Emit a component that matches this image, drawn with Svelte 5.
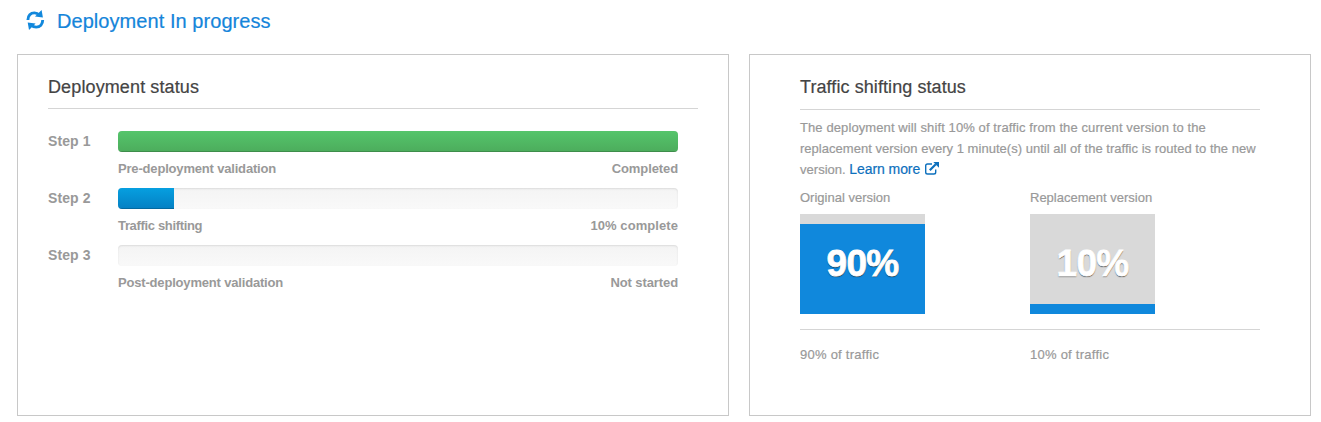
<script>
  const steps = [
    { name: 'Step 1', label: 'Pre-deployment validation', state: 'Completed', percent: 100, tone: 'done', fit: [-0.18, -0.1] },
    { name: 'Step 2', label: 'Traffic shifting', state: '10% complete', percent: 10, tone: 'active', fit: [-0.34, 0.07] },
    { name: 'Step 3', label: 'Post-deployment validation', state: 'Not started', percent: 0, tone: 'idle', fit: [-0.18, -0.1] }
  ];
  const versions = [
    { name: 'Original version', percent: 90 },
    { name: 'Replacement version', percent: 10 }
  ];
</script>

<div class="page">
  <header>
    <svg class="sync" width="20" height="20" viewBox="0 0 20 20" fill="none">
      <path d="M2.9 9.9C2.9 5.6 5.6 2.9 9.4 2.9c2 0 3.6.7 4.8 2.1M17.7 10.1c0 4.3-2.7 7-6.5 7-2 0-3.6-.7-4.8-2.1" stroke="#1288dc" stroke-width="2.9" />
      <path d="M16.6 0l1.3 7.6-7.9-1.1zM4 20l-1.3-7.6 7.9 1.1z" fill="#1288dc" />
    </svg>
    <h1>Deployment In progress</h1>
  </header>

  <main>
    <section class="panel status">
      <h2>Deployment status</h2>
      <div class="steps">
        {#each steps as step}
          <div class="step">
            <div class="name">{step.name}</div>
            <div class="progress">
              <div class="track"><div class="fill {step.tone}" style="width: {step.percent}%"></div></div>
              <div class="caption">
                <span style="letter-spacing: {step.fit[0]}px">{step.label}</span>
                <span style="letter-spacing: {step.fit[1]}px">{step.state}</span>
              </div>
            </div>
          </div>
        {/each}
      </div>
    </section>

    <section class="panel traffic">
      <h2>Traffic shifting status</h2>
      <p>
        <span class="wide">The deployment will shift 10% of traffic from the current version to the</span><br />
        replacement version every 1 minute(s) until all of the traffic is routed to the new<br />
        version. <span class="link">Learn more<svg width="14" height="13" viewBox="0 0 14 13" fill="none">
          <path d="M7 2H2.5Q.7 2 .7 3.8v6.4Q.7 12 2.5 12h6.4q1.8 0 1.8-1.8V7.5" stroke="#0d70bd" stroke-width="1.4" />
          <path d="M4.8 8.3l6-6" stroke="#0d70bd" stroke-width="2.2" />
          <path d="M8.3 0H14v5.7z" fill="#0d70bd" />
        </svg></span>
      </p>
      <div class="versions">
        {#each versions as version}
          <div class="version">
            <div class="title">{version.name}</div>
            <div class="box">
              <div class="level" style="height: {version.percent}%"></div>
              <strong>{version.percent}%</strong>
            </div>
          </div>
        {/each}
      </div>
      <div class="totals">
        {#each versions as version}
          <div class="version">{version.percent}% of traffic</div>
        {/each}
      </div>
    </section>
  </main>
</div>

<style>
  :global(body) {
    background: #fff;
  }
  .page {
    box-sizing: border-box;
    width: 1321px;
    height: 422px;
    overflow: hidden;
    font-family: "Liberation Sans", Arial, sans-serif;
    font-size: 13px;
    color: #999;
  }
  header {
    display: flex;
    box-sizing: border-box;
    height: 54px;
    padding: 10px 0 0 25px;
    gap: 12px;
  }
  .sync {
    display: block;
  }
  h1 {
    margin: 0;
    font-size: 20px;
    line-height: 23px;
    font-weight: 400;
    letter-spacing: 0.06px;
    color: #1585da;
    -webkit-text-stroke: 0.2px;
  }
  main {
    display: flex;
    gap: 20px;
    padding-left: 17px;
  }
  .panel {
    box-sizing: border-box;
    height: 362px;
    border: 1px solid #c8c8c8;
  }
  .status {
    width: 712px;
    padding: 20px 30px 0;
  }
  .traffic {
    width: 562px;
    padding: 20px 50px 0;
  }
  h2 {
    box-sizing: border-box;
    height: 34px;
    margin: 0;
    border-bottom: 1px solid #d5d5d5;
    font-size: 18px;
    line-height: 24px;
    font-weight: 400;
    letter-spacing: 0.12px;
    color: #444;
    -webkit-text-stroke: 0.2px;
  }
  .traffic h2 {
    height: 35px;
    letter-spacing: 0.08px;
  }
  .steps {
    padding-top: 22px;
  }
  .step {
    display: flex;
    height: 57px;
  }
  .name {
    width: 70px;
    font-size: 14px;
    line-height: 21px;
    font-weight: 700;
    letter-spacing: 0.1px;
  }
  .progress {
    width: 560px;
  }
  .track {
    height: 21px;
    overflow: hidden;
    border-radius: 4px;
    background: linear-gradient(#f4f4f4, #f9f9f9);
    box-shadow: inset 0 1px 2px rgba(0, 0, 0, 0.1);
  }
  .fill {
    height: 100%;
    box-shadow: inset 0 -1px 0 rgba(0, 0, 0, 0.18);
  }
  .done {
    background: linear-gradient(#55c56b, #4cac5c);
  }
  .active {
    background: linear-gradient(#069fe0, #0480c3);
  }
  .idle {
    box-shadow: none;
  }
  .caption {
    display: flex;
    justify-content: space-between;
    padding-top: 7px;
    line-height: 20px;
    font-weight: 700;
  }
  p {
    margin: 7px 0 0;
    line-height: 21px;
    letter-spacing: 0.025px;
    white-space: nowrap;
    -webkit-text-stroke: 0.2px;
  }
  .wide {
    letter-spacing: 0.1px;
  }
  .link {
    font-size: 14px;
    letter-spacing: -0.08px;
    color: #0d70bd;
  }
  .link svg {
    margin-left: 5px;
    vertical-align: -1px;
  }
  .versions {
    display: flex;
    box-sizing: border-box;
    height: 150px;
    padding-top: 8px;
    border-bottom: 1px solid #d5d5d5;
  }
  .version {
    width: 230px;
  }
  .title {
    height: 26px;
    line-height: 20px;
    -webkit-text-stroke: 0.2px;
  }
  .box {
    display: grid;
    width: 125px;
    height: 100px;
    background: #d9d9d9;
  }
  .level,
  .box strong {
    grid-area: 1 / 1;
  }
  .level {
    align-self: end;
    background: #1088dc;
  }
  .box strong {
    align-self: center;
    text-align: center;
    font-size: 37px;
    line-height: 40px;
    letter-spacing: -0.7px;
    color: #fff;
    text-shadow: 0 1px 1px rgba(0, 0, 0, 0.8);
    -webkit-text-stroke: 0.8px #fff;
  }
  .totals {
    display: flex;
    padding-top: 15px;
    line-height: 20px;
    letter-spacing: 0.25px;
    -webkit-text-stroke: 0.2px;
  }
</style>
